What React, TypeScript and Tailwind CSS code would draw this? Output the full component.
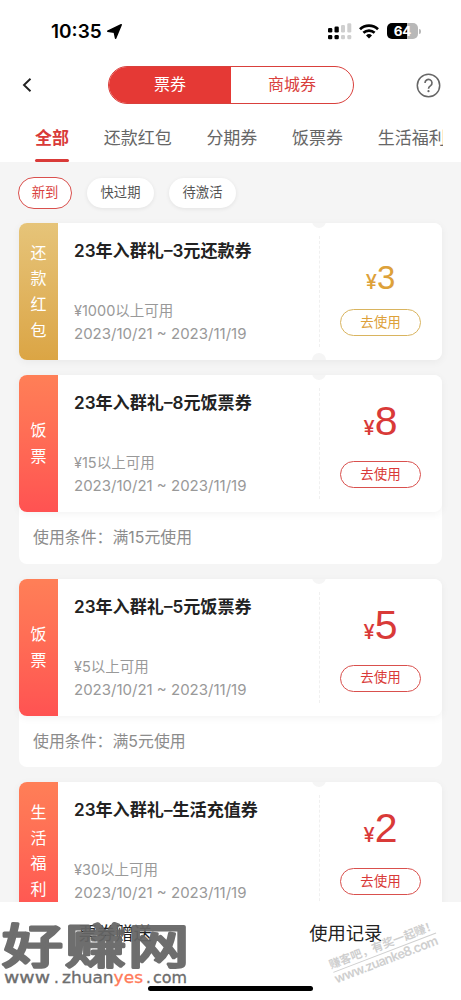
import clsx from 'clsx';

type Coupon = {
  id: string;
  category: string;
  title: string;
  limit: string;
  period: string;
  amount: number;
  tone: 'gold' | 'red';
  condition?: string;
};

const PERIOD = '2023/10/21 ~ 2023/11/19';

const coupons: Coupon[] = [
  { id: 'repay-3', category: '还款红包', title: '23年入群礼–3元还款券', limit: '¥1000以上可用', period: PERIOD, amount: 3, tone: 'gold' },
  { id: 'meal-8', category: '饭票', title: '23年入群礼–8元饭票券', limit: '¥15以上可用', period: PERIOD, amount: 8, tone: 'red', condition: '满15元使用' },
  { id: 'meal-5', category: '饭票', title: '23年入群礼–5元饭票券', limit: '¥5以上可用', period: PERIOD, amount: 5, tone: 'red', condition: '满5元使用' },
  { id: 'life-2', category: '生活福利', title: '23年入群礼–生活充值券', limit: '¥30以上可用', period: PERIOD, amount: 2, tone: 'red' },
];

const tabs = ['全部', '还款红包', '分期券', '饭票券', '生活福利'];

function StatusBar() {
  return (
    <div className="flex h-[62px] items-center justify-between pr-[40px] pl-[51px]">
      <div className="flex items-center gap-[5px]">
        <span className="text-[19px] leading-none font-semibold text-black">10:35</span>
        <svg width="15" height="15" viewBox="0 0 15 15">
          <path d="M14.2.8 8.6 14.2 7.3 8.1.8 7.1Z" fill="#000" stroke="#000" strokeWidth="1.6" strokeLinejoin="round" />
        </svg>
      </div>
      <div className="flex items-center">
        <svg width="24" height="17" viewBox="0 0 24 17">
          <g fill="#000">
            <rect x="0" y="5" width="4.3" height="4.5" rx="1.3" />
            <rect x="6.5" y="3.5" width="4.3" height="6" rx="1.3" />
            <rect x="0" y="12" width="4.3" height="4.3" rx="1.3" />
            <rect x="6.5" y="12" width="4.3" height="4.3" rx="1.3" />
          </g>
          <g fill="#cfcfcf">
            <rect x="13" y="2" width="4" height="7.5" rx="1.3" />
            <rect x="19.3" y="0.3" width="4" height="9.2" rx="1.3" />
            <rect x="13" y="12" width="4" height="4.3" rx="1.3" />
            <rect x="19.3" y="12" width="4" height="4.3" rx="1.3" />
          </g>
        </svg>
        <svg className="ml-[7px]" width="20" height="15" viewBox="0 0 20 15" fill="none" stroke="#000">
          <path d="M1 5.2a13 13 0 0 1 18 0" strokeWidth="2.7" />
          <path d="M4.4 8.8a8.2 8.2 0 0 1 11.2 0" strokeWidth="2.6" />
          <path d="m10 14.6-3-3.2a4.5 4.5 0 0 1 6 0Z" fill="#000" stroke="none" />
        </svg>
        <div className="ml-[8px] flex h-[16px] w-[31px] items-center justify-center rounded-[5px] bg-linear-to-r from-black from-65% to-[#b8b8b8] to-65% pt-px text-[13.5px] leading-none font-bold tracking-[-0.3px] text-white">
          64
        </div>
        <div className="ml-px h-[5px] w-[2px] rounded-r-full bg-[#b8b8b8]" />
      </div>
    </div>
  );
}

function Header() {
  return (
    <div className="flex h-[46px] items-center justify-between pr-[20px] pl-[22px]">
      <svg width="10" height="16" viewBox="0 0 10 16" fill="none" stroke="#222" strokeWidth="1.9">
        <path d="M8.5 1.8 2 8l6.5 6.2" />
      </svg>
      <div className="ml-[14px] grid h-[38px] w-[246px] grid-cols-2 overflow-hidden rounded-full border border-[#d9403c] text-[16px]">
        <button type="button" className="bg-[#e53935] pb-[2px] text-white">票券</button>
        <button type="button" className="pb-[2px] text-[#d9403c]">商城券</button>
      </div>
      <svg width="25" height="25" viewBox="0 0 25 25" fill="none" stroke="#666" strokeWidth="1.5">
        <circle cx="12.5" cy="12.5" r="11.2" />
        <path d="M9 10a3.5 3.5 0 1 1 5.6 2.7c-1.3.9-2.1 1.5-2.1 3" strokeWidth="1.6" />
        <circle cx="12.5" cy="18.2" r="1.1" fill="#666" stroke="none" />
      </svg>
    </div>
  );
}

function Tabs() {
  return (
    <div className="mr-[18px] flex h-[54px] gap-[34.7px] overflow-hidden pl-[35px] text-[17px] whitespace-nowrap">
      {tabs.map((t, i) => (
        <div
          key={t}
          className={clsx(
            'flex shrink-0 flex-col justify-between pt-[18px]',
            i === 0 ? 'font-bold text-[#d93a38]' : 'text-[#666]',
          )}
        >
          <span className="leading-[24px]">{t}</span>
          {i === 0 && <span className="h-[3px] rounded-full bg-[#d93a38]" />}
        </div>
      ))}
    </div>
  );
}

function Filters() {
  return (
    <div className="flex h-[61px] items-center gap-[15px] pl-[18px] text-[13.3px]">
      <span className="flex h-[32px] w-[54px] items-center justify-center rounded-full border border-[#d9504d] bg-white text-[#d9403c]">
        新到
      </span>
      <span className="flex h-[30px] w-[67px] items-center justify-center rounded-full bg-white text-[#555] shadow-[0_1px_4px_rgba(0,0,0,0.08)]">
        快过期
      </span>
      <span className="flex h-[30px] w-[67px] items-center justify-center rounded-full bg-white text-[#555] shadow-[0_1px_4px_rgba(0,0,0,0.08)]">
        待激活
      </span>
    </div>
  );
}

function CouponCard({ coupon }: { coupon: Coupon }) {
  const gold = coupon.tone === 'gold';
  return (
    <div className="rounded-[8px] bg-white">
      <div className="relative flex h-[137px] overflow-hidden rounded-[8px] bg-white shadow-[0_2px_8px_rgba(0,0,0,0.05)]">
        <div
          className={clsx(
            'flex w-[39px] shrink-0 flex-col items-center justify-center pt-px text-[16px] leading-[25.7px] text-white',
            gold ? 'bg-linear-to-b from-[#e6c479] to-[#dba544]' : 'bg-linear-to-b from-[#ff7f57] to-[#ff5252]',
          )}
        >
          {[...coupon.category].map((c) => (
            <span key={c}>{c}</span>
          ))}
        </div>
        <div className="flex w-[261px] shrink-0 flex-col pt-[16px] pl-[16px] whitespace-nowrap">
          <h3 className="text-[17.1px] leading-[24px] font-semibold text-[#222]">{coupon.title}</h3>
          <p className="mt-[36px] text-[14.5px] leading-[23px] text-[#999]">{coupon.limit}</p>
          <p className="text-[15px] leading-[23px] text-[#999]">{coupon.period}</p>
        </div>
        <div className="my-[13px] border-l border-dashed border-[#f0f0f0]" />
        <div className={clsx('flex flex-1 flex-col items-center pr-px', gold ? 'text-[#dda13a]' : 'text-[#d93a38]')}>
          <div className={clsx('flex h-[86px] items-baseline', gold ? 'pt-[38px]' : 'pt-[26px]')}>
            <span className="text-[20px] leading-none font-medium">¥</span>
            <span
              className={clsx(
                "font-['Liberation_Sans'] leading-none",
                gold ? 'text-[33px]' : 'text-[41px]',
              )}
            >
              {coupon.amount}
            </span>
          </div>
          <button
            type="button"
            className={clsx(
              'h-[27px] w-[81px] rounded-full border text-[13.5px] leading-none',
              gold ? 'border-[#d9b45f]' : 'border-[#d9504d]',
            )}
          >
            去使用
          </button>
        </div>
        <span className="absolute -top-[9px] left-[293px] size-[14px] rounded-full bg-[#f5f5f5]" />
        {!coupon.condition && <span className="absolute -bottom-[7px] left-[293px] size-[14px] rounded-full bg-[#f5f5f5]" />}
      </div>
      {coupon.condition && (
        <p className="h-[51.7px] pl-[14px] text-[15.9px] leading-[51px] text-[#8c8c8c]">使用条件：{coupon.condition}</p>
      )}
    </div>
  );
}

function BottomBar() {
  return (
    <div className="relative flex h-[98px] flex-col justify-between bg-white pb-[9px]">
      <div className="grid h-[63px] grid-cols-2 items-center text-center text-[18.3px] text-[#222]">
        <span>票券赠送</span>
        <span>使用记录</span>
      </div>
      <div className="mx-auto h-[5px] w-[165px] rounded-full bg-black" />
      <Watermarks />
    </div>
  );
}

function Watermarks() {
  return (
    <svg className="pointer-events-none absolute inset-0" width="461" height="98" viewBox="0 0 461 98">
      <g fill="#656565" opacity="0.94">
        <text
          transform="translate(2 61) scale(1.3 1)"
          fontSize="47"
          fontWeight="400"
          textLength="144"
          stroke="#656565"
          strokeWidth="3"
          strokeLinejoin="round"
        >
          好赚网
        </text>
        <g fontSize="15" stroke="#656565" strokeWidth="0.3" className="font-['DejaVu_Sans']">
          <text x="4" y="81" textLength="46" lengthAdjust="spacingAndGlyphs">www</text>
          <text x="54" y="81">.</text>
          <text x="62" y="81" textLength="81" lengthAdjust="spacingAndGlyphs">
            zhuan<tspan fill="#ff7350" stroke="#ff7350">yes</tspan>
          </text>
          <text x="146" y="81">.</text>
          <text x="153" y="81" textLength="34" lengthAdjust="spacingAndGlyphs">com</text>
        </g>
      </g>
      <g transform="translate(331 67) rotate(-21)" fill="#cfcfcf">
        <text x="0" y="0" fontSize="11.5" fontWeight="700" textLength="114">赚客吧，有奖一起赚！</text>
        <path d="M1 4H111" stroke="#cfcfcf" />
        <text x="0" y="15.5" fontSize="13" fontWeight="600" textLength="110">www.zuanke8.com</text>
      </g>
    </svg>
  );
}

export default function App() {
  return (
    <div className="flex h-[1000px] w-[461px] flex-col overflow-hidden bg-[#f5f5f5] font-[Inter,'Noto_Sans_CJK_SC',sans-serif]">
      <div className="shrink-0 bg-white">
        <StatusBar />
        <Header />
        <Tabs />
      </div>
      <main className="min-h-0 flex-1 overflow-hidden">
        <Filters />
        <div className="flex flex-col gap-[15px] pr-[19px] pl-[19px]">
          {coupons.map((c) => (
            <CouponCard key={c.id} coupon={c} />
          ))}
        </div>
      </main>
      <BottomBar />
    </div>
  );
}
